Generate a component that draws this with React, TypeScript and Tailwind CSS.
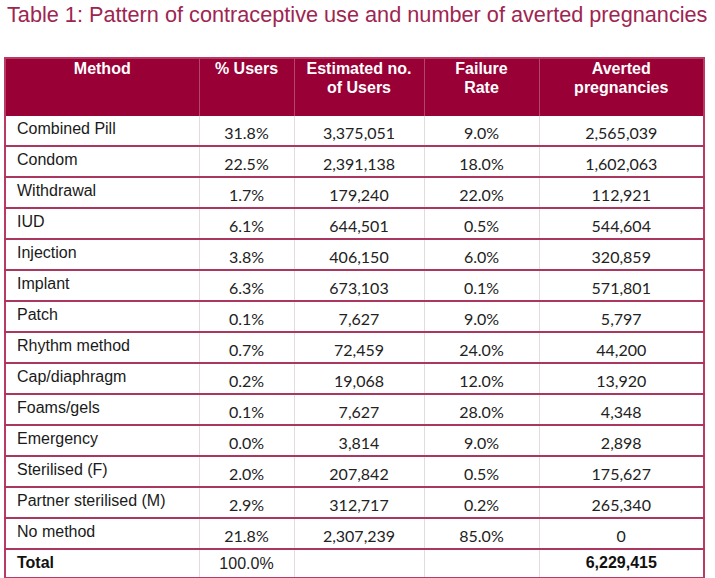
const rows: [string, string, string, string, string][] = [
  ['Combined Pill', '31.8%', '3,375,051', '9.0%', '2,565,039'],
  ['Condom', '22.5%', '2,391,138', '18.0%', '1,602,063'],
  ['Withdrawal', '1.7%', '179,240', '22.0%', '112,921'],
  ['IUD', '6.1%', '644,501', '0.5%', '544,604'],
  ['Injection', '3.8%', '406,150', '6.0%', '320,859'],
  ['Implant', '6.3%', '673,103', '0.1%', '571,801'],
  ['Patch', '0.1%', '7,627', '9.0%', '5,797'],
  ['Rhythm method', '0.7%', '72,459', '24.0%', '44,200'],
  ['Cap/diaphragm', '0.2%', '19,068', '12.0%', '13,920'],
  ['Foams/gels', '0.1%', '7,627', '28.0%', '4,348'],
  ['Emergency', '0.0%', '3,814', '9.0%', '2,898'],
  ['Sterilised (F)', '2.0%', '207,842', '0.5%', '175,627'],
  ['Partner sterilised (M)', '2.9%', '312,717', '0.2%', '265,340'],
  ['No method', '21.8%', '2,307,239', '85.0%', '0'],
]

const arial = "font-['Liberation_Sans',Arial,sans-serif]"
const numCell = "border-x border-x-[#e2dcdc] text-center align-top pt-[5px] font-['Lato',sans-serif] text-[16px] text-[#222]"

export default function App() {
  return (
    <div className={`w-[715px] h-[578px] bg-white overflow-hidden ${arial}`}>
      <h1 className="pl-[7px] pt-[4px] text-[21.7px] leading-[22px] text-[#9e2550] font-normal whitespace-nowrap">
        Table 1: Pattern of contraceptive use and number of averted pregnancies
      </h1>
      <div className="pl-[4px] pt-[31px]">
        <table className="w-[699px] table-fixed border-collapse border-2 border-[#b93a63]">
          <colgroup>
            <col className="w-[194px]" />
            <col className="w-[95px]" />
            <col className="w-[130px]" />
            <col className="w-[115px]" />
            <col className="w-[165px]" />
          </colgroup>
          <thead>
            <tr className="h-[58px] bg-[#990035] text-white text-[16px] font-bold leading-[18.5px]">
              <th className="align-top pt-[1px] border-r border-r-[#b2456a]">Method</th>
              <th className="align-top pt-[1px] border-r border-r-[#b2456a]">% Users</th>
              <th className="align-top pt-[1px] border-r border-r-[#b2456a]">
                Estimated no.
                <br />
                of Users
              </th>
              <th className="align-top pt-[1px] border-r border-r-[#b2456a]">
                Failure
                <br />
                Rate
              </th>
              <th className="align-top pt-[1px]">
                Averted
                <br />
                pregnancies
              </th>
            </tr>
          </thead>
          <tbody>
            {rows.map((r, i) => (
              <tr
                key={r[0]}
                className={`${i % 3 === 2 ? 'h-[29px]' : 'h-[30px]'} border-b-2 border-b-[#ab3660]`}
              >
                <td className="align-top pt-[1px] pl-[11px] text-[16px] text-[#1a1a1a] border-r border-r-[#e2dcdc]">
                  {r[0]}
                </td>
                <td className={numCell}>{r[1]}</td>
                <td className={numCell}>{r[2]}</td>
                <td className={numCell}>{r[3]}</td>
                <td className={numCell}>{r[4]}</td>
              </tr>
            ))}
            <tr className="h-[29px]">
              <td className="align-top pt-[1px] pl-[11px] text-[16px] font-bold text-[#111] border-r border-r-[#e2dcdc]">
                Total
              </td>
              <td className="align-top pt-[2px] text-center text-[16px] text-[#222] border-r border-r-[#e2dcdc]">
                100.0%
              </td>
              <td className="border-r border-r-[#e2dcdc]" />
              <td className="border-r border-r-[#e2dcdc]" />
              <td className="align-top pt-[1px] text-center text-[16px] font-bold text-[#111]">6,229,415</td>
            </tr>
          </tbody>
        </table>
      </div>
    </div>
  )
}
